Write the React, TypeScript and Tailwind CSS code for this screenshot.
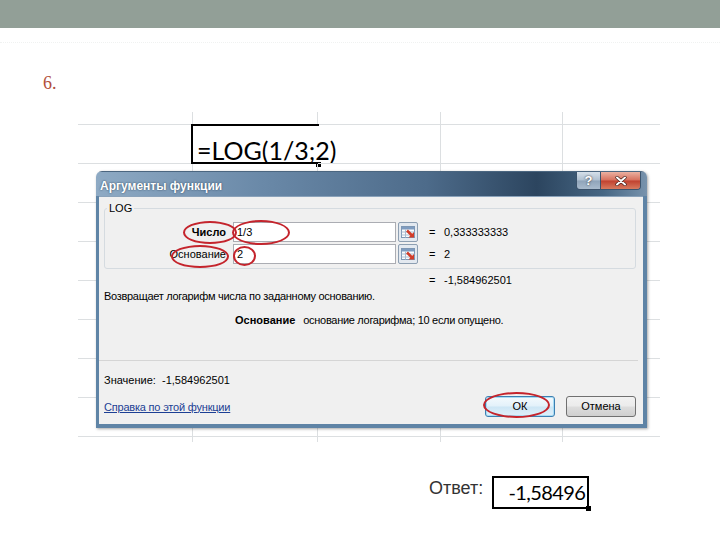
import React from 'react';

const colWidths = [115, 125, 123, 122, 97];
const rowHeights = [13, 39, 39, 39, 39, 39, 39, 39, 39, 5];

function RefEditIcon() {
  return (
    <svg width="20" height="20" viewBox="0 0 20 20">
      <rect x="0.5" y="0.5" width="19" height="19" rx="1.5" fill="#e3e9f0" stroke="#8d9fb2" />
      <rect x="3.5" y="4.5" width="13" height="11" fill="#fbfcfd" stroke="#7d97b4" />
      <rect x="4" y="5" width="12" height="2.5" fill="#7f9cc0" />
      <path d="M3.5 10h13M3.5 13h13M7.5 7.5v8" stroke="#a9bcd1" />
      <path d="M9 8.5l5 5" stroke="#d23c28" strokeWidth="2.6" />
      <path d="M16 15.5h-5.5l5.5-5.5z" fill="#d23c28" />
    </svg>
  );
}

function Ellipse({ className }: { className: string }) {
  return <div className={`absolute rounded-[50%] border-2 border-[#c4242c] pointer-events-none ${className}`} />;
}

function Sheet() {
  return (
    <div className="relative ml-[78px] mt-[19px] w-[582px] h-[330px]">
      <div className="grid grid-cols-[115px_125px_123px_122px_97px] grid-rows-[13px_39px_39px_39px_39px_39px_39px_39px_39px_5px]">
        {rowHeights.map((_, r) =>
          colWidths.map((__, c) => {
            const formula = r === 1 && c === 1;
            const right = c < 4 && !formula ? 'border-r' : '';
            const bottom = r < 9 ? 'border-b' : '';
            return (
              <div key={`${r}-${c}`} className={`relative border-[#dcdfe1] ${right} ${bottom}`}>
                {formula && (
                  <>
                    <div className="absolute left-[-2px] top-[-1px] bottom-[-1px] right-[-1px] border-l-2 border-t-2 border-b-2 border-black" />
                    <div className="absolute right-[-3px] bottom-[-4px] w-[5px] h-[5px] bg-black" />
                    <div className="pl-[4px] pt-[12px] whitespace-nowrap leading-[26px] text-[25px] text-black font-['Lato',sans-serif]">
                      =LOG(1/3;2)
                    </div>
                  </>
                )}
              </div>
            );
          })
        )}
      </div>
      <Dialog />
    </div>
  );
}

function Dialog() {
  return (
    <div className="absolute left-[18px] top-[59px] w-[551px] h-[257px] flex flex-col rounded-t-[6px] overflow-hidden shadow-[1px_1px_3px_rgba(0,0,0,0.35)] text-[11px] text-black">
      <div className="h-[25px] shrink-0 flex justify-between bg-[linear-gradient(90deg,#8eaac4_0%,#6a89a8_30%,#4d6b8a_60%,#2c455f_80%,#466683_92%,#7893ad_100%)] border-t border-[#4b6680]">
        <div className="pl-[4px] pt-[5px] text-[12px] font-bold text-white [text-shadow:0_0_2px_#2a4058]">Аргументы функции</div>
        <div className="flex self-start mr-[6px] rounded-b-[4px] border border-t-0 border-[#3b536c] overflow-hidden">
          <div className="w-[24px] h-[17px] flex items-center justify-center border-r border-[#3b536c] bg-[linear-gradient(180deg,#d6e0ea_0%,#aebfd0_48%,#8fa4ba_52%,#a9bbcd_100%)] text-[13px] font-bold text-white [text-shadow:0_0_2px_#222]">
            ?
          </div>
          <div className="w-[39px] h-[17px] flex items-center justify-center bg-[linear-gradient(180deg,#eab1a1_0%,#d7705d_48%,#c0412f_52%,#d77a5e_100%)]">
            <svg width="12" height="10" viewBox="0 0 12 10">
              <path d="M2 1.5l8 7M10 1.5l-8 7" stroke="#3a1a14" strokeWidth="3.2" strokeLinecap="round" />
              <path d="M2 1.5l8 7M10 1.5l-8 7" stroke="#fff" strokeWidth="2" strokeLinecap="round" />
            </svg>
          </div>
        </div>
      </div>
      <div className="flex-1 flex bg-[#5f84a6] pl-[3px] pr-[4px] pb-[4px]">
        <div className="relative flex-1 flex flex-col bg-[#f0f0f0] border-t border-[#8aa2ba]">
          <div className="relative mt-[11px] ml-[5px] mr-[7px] h-[61px] border border-[#d5dbe0] rounded-[3px] pt-[13px] pb-[4px] flex flex-col gap-[2px]">
            <span className="absolute -top-[8px] left-[2px] px-[2px] bg-[#f0f0f0] leading-[14px]">LOG</span>
            <ArgRow label="Число" bold value="1/3" result="0,333333333" />
            <ArgRow label="Основание" value="2" result="2" />
          </div>
          <div className="mt-[4px] h-[14px] leading-[14px] pl-[330px] flex">
            <span className="w-[15px]">=</span>
            <span>-1,584962501</span>
          </div>
          <div className="mt-[2px] h-[14px] leading-[14px] pl-[5px] tracking-[-0.3px]">Возвращает логарифм числа по заданному основанию.</div>
          <div className="mt-[10px] h-[14px] leading-[14px] pl-[136px] flex gap-[8px]">
            <span className="font-bold">Основание</span>
            <span className="tracking-[-0.3px]">основание логарифма; 10 если опущено.</span>
          </div>
          <div className="mt-[33px] mr-[5px] h-px bg-[#d5d5d5]" />
          <div className="mt-[12px] h-[14px] leading-[14px] pl-[5px] flex">
            <span className="w-[58px]">Значение:</span>
            <span>-1,584962501</span>
          </div>
          <div className="mt-[9px] h-[21px] flex items-center pl-[5px] pr-[7px]">
            <span className="text-[#1c3f94] underline leading-[14px] tracking-[-0.2px]">Справка по этой функции</span>
            <div className="ml-auto w-[70px] h-[21px] flex items-center justify-center rounded-[3px] border border-[#3c7fb1] bg-[linear-gradient(180deg,#f4fafd_0%,#e3f1fa_48%,#cde6f5_52%,#e0f0fa_100%)] shadow-[inset_0_0_0_1px_#a8dcf5]">
              ОК
            </div>
            <div className="ml-[11px] w-[70px] h-[21px] flex items-center justify-center rounded-[3px] border border-[#707070] bg-[linear-gradient(180deg,#f2f2f2_0%,#ebebeb_48%,#dddddd_52%,#cfcfcf_100%)]">
              Отмена
            </div>
          </div>
        </div>
      </div>
      <Ellipse className="left-[87px] top-[50px] w-[54px] h-[23px]" />
      <Ellipse className="left-[136px] top-[49px] w-[58px] h-[25px]" />
      <Ellipse className="left-[75px] top-[74px] w-[58px] h-[23px]" />
      <Ellipse className="left-[137px] top-[75px] w-[23px] h-[20px]" />
      <Ellipse className="left-[387px] top-[221px] w-[67px] h-[26px]" />
    </div>
  );
}

function ArgRow({ label, value, result, bold }: { label: string; value: string; result: string; bold?: boolean }) {
  return (
    <div className="h-[20px] flex items-center">
      <span className={`w-[121px] text-right ${bold ? 'font-bold' : ''}`}>{label}</span>
      <div className="ml-[7px] w-[163px] h-[20px] bg-white border border-[#abadb3] pl-[3px] leading-[18px]">{value}</div>
      <div className="ml-[2px]">
        <RefEditIcon />
      </div>
      <span className="ml-[11px] w-[15px]">=</span>
      <span>{result}</span>
    </div>
  );
}

function Answer() {
  return (
    <div className="mt-[33px] ml-[429px] flex items-center gap-[9px]">
      <span className="mb-[7px] text-[18px] text-[#333]">Ответ:</span>
      <div className="relative w-[97px] h-[33px] border-2 border-black text-right pr-[2px] leading-[29px] text-[20px] tracking-[-0.6px] text-black font-['Lato',sans-serif]">
        -1,58496
        <div className="absolute right-[-4px] bottom-[-4px] w-[5px] h-[5px] bg-black" />
      </div>
    </div>
  );
}

export default function App() {
  return (
    <div className="w-[720px] h-[540px] bg-white overflow-hidden font-['Liberation_Sans',Arial,sans-serif]">
      <div className="h-[28px] bg-[#929f97]" />
      <div className="mt-[14px] border-t border-dotted border-[#f0f2f1]" />
      <div className="mt-[30px] pl-[43px] h-[20px] leading-[20px] text-[18px] text-[#b24f3c] font-['Liberation_Serif',serif]">6.</div>
      <Sheet />
      <Answer />
    </div>
  );
}
